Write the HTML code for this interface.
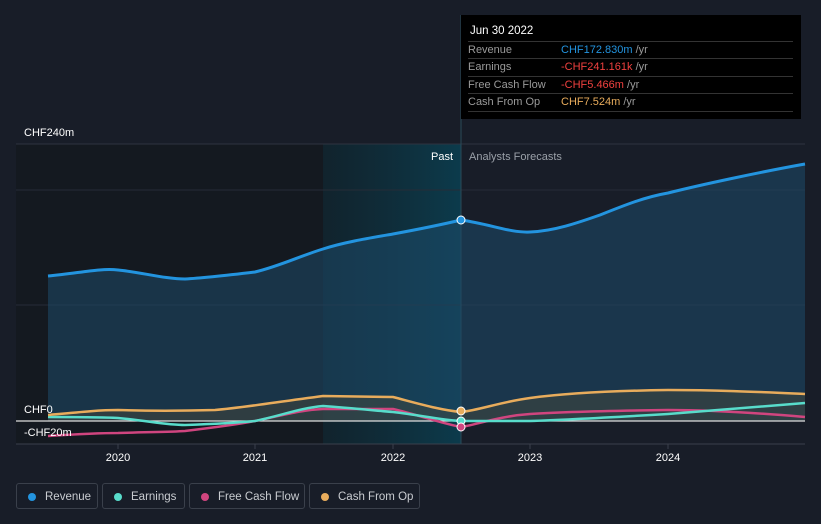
<!DOCTYPE html>
<html><head><meta charset="utf-8"><style>
body{margin:0;background:#181d28;font-family:"Liberation Sans",sans-serif;width:821px;height:524px;overflow:hidden;position:relative}
.tt{position:absolute;left:461px;top:15px;width:340px;height:104px;background:#000;color:#fff;font-size:11px}
.tt .h{position:absolute;left:9px;top:10px;font-size:11.5px}
.tt .r{position:absolute;left:7px;width:325px;border-top:1px solid #333;height:17px;line-height:17px;color:#9a9a9a}
.tt .r span{position:absolute;left:93px}
.lg{position:absolute;top:483px;height:26px;border:1px solid #3a404b;border-radius:3px;color:#c9ccd1;font-size:11.5px;line-height:26px;box-sizing:border-box}
.lg i{position:absolute;left:11px;top:9px;width:8px;height:8px;border-radius:50%}
.lg b{font-weight:normal;position:absolute;left:28px}
</style></head><body>
<svg width="821" height="524" style="position:absolute;left:0;top:0">
<defs><linearGradient id="hl" x1="0" x2="1"><stop offset="0" stop-color="#0f2a36" stop-opacity=".6"/><stop offset="1" stop-color="#0c3b4c"/></linearGradient></defs>
<rect x="16" y="144" width="445" height="300" fill="#141920"/>
<rect x="323" y="144" width="138" height="300" fill="url(#hl)"/>
<line x1="16" y1="144" x2="805" y2="144" stroke="#2e3440"/>
<line x1="16" y1="190" x2="805" y2="190" stroke="#262c37"/>
<line x1="16" y1="305" x2="805" y2="305" stroke="#262c37"/>
<line x1="16" y1="444" x2="805" y2="444" stroke="#3a404b"/>
<line x1="461" y1="15" x2="461" y2="444" stroke="#2a4a58"/>
<path d="M48,276 C80,273 100,268 118,270 C140,272 165,279 185,279 C205,278 230,275 255,272 C280,266 300,256 323,249 C345,242 370,238 393,234 C420,229 440,225 461,220 C490,224 510,233 530,232 C555,231 580,222 600,215 C625,205 645,197 668,193 C700,185 760,172 805,164 L805,421 L48,421Z" fill="#1e4a6a" fill-opacity=".55"/>
<path d="M48,415 C80,412 100,410 118,410 C150,411 180,411 215,410 C240,408 270,403 323,396 L393,397 C420,404 440,410 461,412 C480,410 500,402 530,398 C560,394 600,391 668,390 C720,390 760,392 805,394 L805,421 L48,421Z" fill="#5a5036" fill-opacity=".35"/>
<path d="M48,276 C80,273 100,268 118,270 C140,272 165,279 185,279 C205,278 230,275 255,272 C280,266 300,256 323,249 C345,242 370,238 393,234 C420,229 440,225 461,220 C490,224 510,233 530,232 C555,231 580,222 600,215 C625,205 645,197 668,193 C700,185 760,172 805,164" fill="none" stroke="#2394df" stroke-width="3"/>
<line x1="16" y1="421" x2="805" y2="421" stroke="#ddd" stroke-width="1.3"/>
<path d="M48,436 C80,434 100,433 118,433 C150,432 170,432 185,431 C210,428 235,425 255,421 C280,416 300,410 323,409 L393,409 C415,414 440,423 461,427 C475,425 500,416 530,414 C560,412 600,411 668,410 C720,410 770,414 805,417" fill="none" stroke="#d0457f" stroke-width="2.5"/>
<path d="M48,417 C80,417 100,417 118,418 C150,421 165,425 185,425 C215,424 235,423 255,421 C280,416 300,408 323,406 C350,408 370,410 393,412 C420,415 440,420 461,421 C490,421 510,421 530,421 C560,420 600,418 668,414 C720,410 770,406 805,403" fill="none" stroke="#58dccb" stroke-width="2.5"/>
<path d="M48,415 C80,412 100,410 118,410 C150,411 180,411 215,410 C240,408 270,403 323,396 L393,397 C420,404 440,410 461,412 C480,410 500,402 530,398 C560,394 600,391 668,390 C720,390 760,392 805,394" fill="none" stroke="#e8ac5c" stroke-width="2.5"/>
<circle cx="461" cy="220" r="4" fill="#2394df" stroke="#fff" stroke-width="1"/>
<circle cx="461" cy="411" r="4" fill="#e8ac5c" stroke="#fff" stroke-width="1"/>
<circle cx="461" cy="421" r="4" fill="#58dccb" stroke="#fff" stroke-width="1"/>
<circle cx="461" cy="427" r="4" fill="#d0457f" stroke="#fff" stroke-width="1"/>
<g fill="#fff" font-size="11" font-family="Liberation Sans">
<text x="24" y="136">CHF240m</text><text x="24" y="413">CHF0</text><text x="24" y="436">-CHF20m</text>
<text x="431" y="160" font-size="11">Past</text>
<text x="469" y="160" fill="#9aa0a8">Analysts Forecasts</text>
<text x="118" y="461" text-anchor="middle">2020</text><text x="255" y="461" text-anchor="middle">2021</text><text x="393" y="461" text-anchor="middle">2022</text><text x="530" y="461" text-anchor="middle">2023</text><text x="668" y="461" text-anchor="middle">2024</text>
</g>
<g stroke="#3a404b"><line x1="118" y1="444" x2="118" y2="449"/><line x1="255" y1="444" x2="255" y2="449"/><line x1="393" y1="444" x2="393" y2="449"/><line x1="530" y1="444" x2="530" y2="449"/><line x1="668" y1="444" x2="668" y2="449"/></g>
</svg>
<div class="tt"><div class="h">Jun 30 2022</div>
<div class="r" style="top:26px">Revenue<span style="color:#2394df">CHF172.830m <em style="font-style:normal;color:#9a9a9a">/yr</em></span></div>
<div class="r" style="top:43px">Earnings<span style="color:#f0413f">-CHF241.161k <em style="font-style:normal;color:#9a9a9a">/yr</em></span></div>
<div class="r" style="top:61px">Free Cash Flow<span style="color:#f0413f">-CHF5.466m <em style="font-style:normal;color:#9a9a9a">/yr</em></span></div>
<div class="r" style="top:78px;border-bottom:1px solid #333">Cash From Op<span style="color:#e8ac5c">CHF7.524m <em style="font-style:normal;color:#9a9a9a">/yr</em></span></div>
</div>
<div class="lg" style="left:16px;width:82px"><i style="background:#2394df"></i><b>Revenue</b></div>
<div class="lg" style="left:102px;width:83px"><i style="background:#58dccb"></i><b>Earnings</b></div>
<div class="lg" style="left:189px;width:116px"><i style="background:#d0457f"></i><b>Free Cash Flow</b></div>
<div class="lg" style="left:309px;width:111px"><i style="background:#e8ac5c"></i><b>Cash From Op</b></div>
</body></html>
